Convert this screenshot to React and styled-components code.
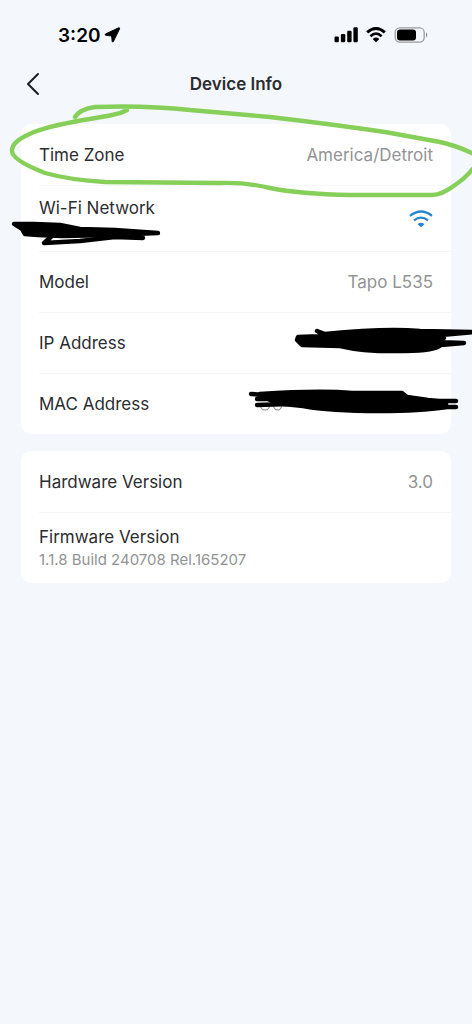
import React from "react";
import styled, { createGlobalStyle } from "styled-components";

const GlobalStyle = createGlobalStyle`
  * {
    box-sizing: border-box;
  }
  body {
    margin: 0;
    background: #f4f7fb;
    font-family: Inter, "Liberation Sans", sans-serif;
    color: #2b2d30;
  }
`;

// Styled components
const Page = styled.div`
  position: relative;
  min-height: 100vh;
  overflow: hidden;
`;

const StatusBar = styled.div`
  display: flex;
  align-items: center;
  justify-content: space-between;
  height: 52px;
  padding: 18px 44px 0 58px;
  color: #000;
`;

const Clock = styled.div`
  display: flex;
  align-items: center;
  gap: 3px;
  font-size: 19px;
  font-weight: 600;
`;

const StatusIcons = styled.div`
  display: flex;
  align-items: center;
  gap: 8px;
`;

const NavBar = styled.header`
  display: grid;
  grid-template-columns: 48px 1fr 48px;
  align-items: center;
  height: 64px;
  padding: 0 9px;
`;

const BackButton = styled.button`
  display: flex;
  align-items: center;
  justify-content: center;
  height: 44px;
  padding: 0;
  background: transparent;
  border: none;
  color: #1c1e21;
`;

const Title = styled.h1`
  margin: 0;
  font-size: 17px;
  font-weight: 600;
  text-align: center;
`;

const Content = styled.main`
  display: flex;
  flex-direction: column;
  gap: 17px;
  padding: 8px 21px;
`;

const Card = styled.section`
  padding-left: 18px;
  background: #fff;
  border-radius: 10px;
`;

const Row = styled.div`
  display: flex;
  align-items: center;
  justify-content: space-between;
  height: ${(props) => props.$height || 61}px;
  padding-right: 18px;

  & + & {
    border-top: 1px solid #f5f6f7;
  }
`;

const Label = styled.div`
  font-size: 17px;
  line-height: 24px;
`;

const Value = styled.div`
  font-size: 17px;
  line-height: 24px;
  color: #929395;
`;

const SubLabel = styled.div`
  min-height: 22px;
  font-size: 15px;
  line-height: 22px;
  color: #929395;
`;

const Markup = styled.svg`
  position: absolute;
  top: 0;
  left: 0;
  pointer-events: none;
`;

const LocationArrow = () => (
  <svg width="17" height="16" viewBox="0 0 17 16" aria-hidden="true">
    <path
      d="M14.6.8 1.4 7Q.6 8 1.7 8.3L7.6 9 8.2 14.6Q8.6 15.6 9.4 14.6L15.6 1.8Q15.8.4 14.6.8Z"
      fill="currentColor"
      stroke="currentColor"
      strokeWidth="0.9"
      strokeLinejoin="round"
    />
  </svg>
);

const SignalIcon = () => (
  <svg width="24" height="16" viewBox="0 0 24 16" aria-hidden="true">
    <rect x="0.5" y="9.5" width="4.4" height="5.8" rx="1.2" />
    <rect x="6.9" y="7" width="4.4" height="8.3" rx="1.2" />
    <rect x="13.2" y="3.8" width="4.4" height="11.5" rx="1.2" />
    <rect x="19.4" y="0.3" width="4.4" height="15" rx="1.2" />
  </svg>
);

const StatusWifiIcon = () => (
  <svg width="20" height="16" viewBox="0 0 20 16" fill="none" aria-hidden="true">
    <path d="M1.2 5.4Q10-2.4 18.8 5.4" stroke="currentColor" strokeWidth="2.9" />
    <path d="M4.4 9.2Q10 4.2 15.6 9.2" stroke="currentColor" strokeWidth="2.7" />
    <path d="M10 15.2 6.7 12Q10 9.2 13.3 12Z" fill="currentColor" />
  </svg>
);

const BatteryIcon = () => (
  <svg width="34" height="16" viewBox="0 0 34 16" fill="none" aria-hidden="true">
    <rect x="1.2" y="0.8" width="29" height="14.4" rx="4.6" stroke="#9b9da0" strokeWidth="1.3" />
    <rect x="3" y="2.5" width="19" height="11" rx="3" fill="currentColor" />
    <path d="M32 5.3Q34.6 8 32 10.7Z" fill="#8c8e91" />
  </svg>
);

const WifiIcon = () => (
  <svg width="24" height="18" viewBox="0 0 24 18" fill="none" role="img" aria-label="Signal strength">
    <path d="M1 5.8Q12-2.8 23 5.8" stroke="#2585cc" strokeWidth="2.2" />
    <path d="M5 10.4Q12 5 19 10.4" stroke="#2585cc" strokeWidth="2.2" />
    <path d="M12 17.2 8.6 14.2Q12 11.4 15.4 14.2Z" fill="#2585cc" />
  </svg>
);

// Hand drawn strokes over the settings list
const Annotations = () => (
  <Markup
    width="472"
    height="600"
    viewBox="0 0 472 600"
    fill="none"
    strokeLinecap="round"
    strokeLinejoin="round"
    aria-hidden="true"
  >
    <path
      d="M75 117Q80 109 95 107Q145 105 190 110L270 117Q330 124 385 132L440 142Q458 146 476 155M476 165Q466 178 455 185Q442 195 432 195L350 195Q300 194 270 188Q245 182 220 183L105 182Q70 180 45 173C22 164 12 157 12 151C12 143 20 138 34 132C60 122 95 119 112 115Q120 114 127 110"
      stroke="#86cf58"
      strokeWidth="4.4"
    />
    <path d="M260 405Q261 410 265 410Q269 410 270 405M273 405Q274 410 278 410Q281 410 282 405" stroke="#8b8b8b" strokeWidth="1.2" />
    <g stroke="#000" strokeWidth="4.4">
      <path d="M14 224 31 224 34 224 60 225 80 229 115 230 158 233 110 235 62 236 38 235 25 234 22 229Z" fill="#000" />
      <path d="M53 235 44 243 80 241 115 237 143 238" />
      <path
        d="M317 331 325 334Q385 328 420 331L474 332 430 336 444 338 435 342 464 343 441 345Q435 351 405 351Q365 352 340 346L302 345 297 340 298 337 325 336Z"
        fill="#000"
      />
      <path d="M251 394 285 396M257 399 290 399M257 405 290 404M400 401 456 401M400 407 456 407" />
      <path
        d="M260 394Q320 390 352 393L402 393 407 397 428 400 446 402 446 407Q420 411 380 411Q330 411 303 406L284 404 272 401Z"
        fill="#000"
      />
    </g>
  </Markup>
);

const InfoRow = ({ label, value }) => (
  <Row>
    <Label>{label}</Label>
    <Value>{value}</Value>
  </Row>
);

const App = () => {
  return (
    <Page>
      <GlobalStyle />
      <StatusBar>
        <Clock>
          3:20
          <LocationArrow />
        </Clock>
        <StatusIcons>
          <SignalIcon />
          <StatusWifiIcon />
          <BatteryIcon />
        </StatusIcons>
      </StatusBar>
      <NavBar>
        <BackButton aria-label="Back">
          <svg width="14" height="24" viewBox="0 0 14 24" fill="none">
            <path d="M12 2 2 12 12 22" stroke="currentColor" strokeWidth="2" strokeLinecap="round" strokeLinejoin="round" />
          </svg>
        </BackButton>
        <Title>Device Info</Title>
      </NavBar>
      <Content>
        <Card>
          <InfoRow label="Time Zone" value="America/Detroit" />
          <Row $height={66}>
            <div>
              <Label>Wi-Fi Network</Label>
              <SubLabel />
            </div>
            <WifiIcon />
          </Row>
          <InfoRow label="Model" value="Tapo L535" />
          <InfoRow label="IP Address" />
          <InfoRow label="MAC Address" />
        </Card>
        <Card>
          <InfoRow label="Hardware Version" value="3.0" />
          <Row $height={71}>
            <div>
              <Label>Firmware Version</Label>
              <SubLabel>1.1.8 Build 240708 Rel.165207</SubLabel>
            </div>
          </Row>
        </Card>
      </Content>
      <Annotations />
    </Page>
  );
};

export default App;
